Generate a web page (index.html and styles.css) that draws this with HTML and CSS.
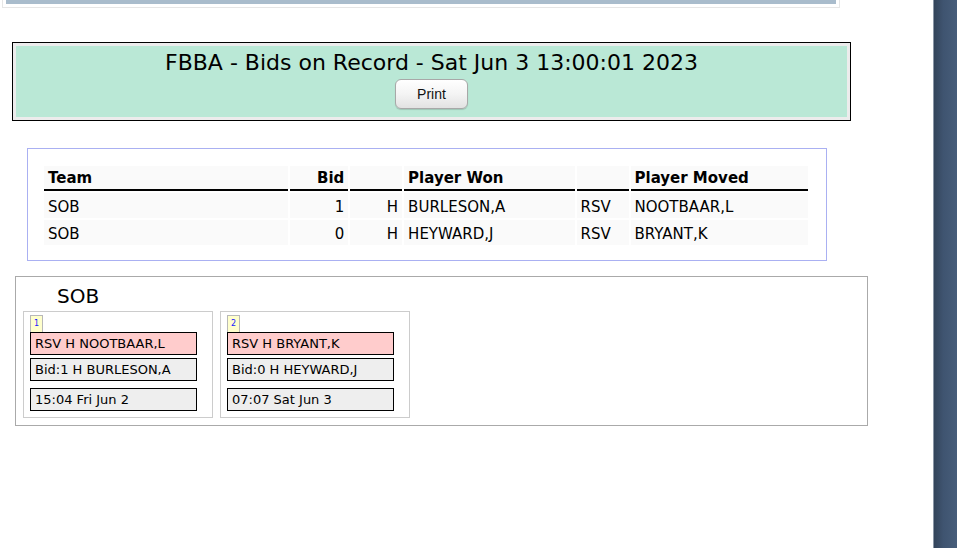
FILE: index.html
```html
<!DOCTYPE html>
<html>
<head>
<meta charset="utf-8">
<title>FBBA - Bids on Record</title>
<link rel="stylesheet" href="styles.css">
</head>
<body>
<div class="layout">
  <div class="main">
    <div class="topbox"><div class="topbar"></div></div>

    <div class="header">
      <div class="header-inner">
        <div class="title">FBBA - Bids on Record - Sat Jun 3 13:00:01 2023</div>
        <button class="print">Print</button>
      </div>
    </div>

    <div class="tablebox">
      <table class="bids">
        <thead>
          <tr>
            <th class="c-team">Team</th>
            <th class="c-bid num">Bid</th>
            <th class="c-pos"></th>
            <th class="c-won">Player Won</th>
            <th class="c-rsv"></th>
            <th class="c-moved">Player Moved</th>
          </tr>
        </thead>
        <tbody>
          <tr>
            <td>SOB</td>
            <td class="num">1</td>
            <td class="num">H</td>
            <td>BURLESON,A</td>
            <td>RSV</td>
            <td>NOOTBAAR,L</td>
          </tr>
          <tr>
            <td>SOB</td>
            <td class="num">0</td>
            <td class="num">H</td>
            <td>HEYWARD,J</td>
            <td>RSV</td>
            <td>BRYANT,K</td>
          </tr>
        </tbody>
      </table>
    </div>

    <div class="teambox">
      <div class="teamname">SOB</div>
      <div class="cards">
        <div class="card">
          <div class="badge">1</div>
          <div class="line moved">RSV H NOOTBAAR,L</div>
          <div class="line">Bid:1 H BURLESON,A</div>
          <div class="line date">15:04 Fri Jun 2</div>
        </div>
        <div class="card">
          <div class="badge">2</div>
          <div class="line moved">RSV H BRYANT,K</div>
          <div class="line">Bid:0 H HEYWARD,J</div>
          <div class="line date">07:07 Sat Jun 3</div>
        </div>
      </div>
    </div>
  </div>
  <div class="side"></div>
</div>
</body>
</html>
```

FILE: styles.css
```css
html, body {
  margin: 0;
  padding: 0;
  background: #ffffff;
}
body {
  font-family: "DejaVu Sans", Verdana, sans-serif;
  color: #000;
  overflow: hidden;
}
.layout {
  display: flex;
  height: 548px;
}
.main {
  width: 933px;
  flex: none;
}
.side {
  flex: 1;
  border-left: 1px solid #8a96a6;
  background: linear-gradient(to right, #33445a, #3f5470 40%, #475d7a);
}

.topbox {
  margin-left: 2px;
  width: 830px;
  padding: 0 3px 3px;
  border: 1px solid #e6e6e6;
  border-top: none;
}
.topbar {
  height: 4px;
  background: #a9bccc;
}

.header {
  margin: 34px 0 0 12px;
  width: 831px;
  border: 1px solid #000;
  padding: 3px;
  background: #ececec;
}
.header-inner {
  background: #bae8d6;
  height: 71px;
  display: flex;
  flex-direction: column;
  align-items: center;
  padding-top: 4px;
  box-sizing: border-box;
}
.title {
  font-size: 22px;
  line-height: 26px;
}
.print {
  margin-top: 3px;
  width: 73px;
  height: 30px;
  font-family: "Liberation Sans", Arial, sans-serif;
  font-size: 14px;
  color: #111;
  border: 1px solid #a8a8a8;
  border-radius: 6px;
  background: linear-gradient(to bottom, #ffffff, #f4f4f4 50%, #e2e2e2);
  box-shadow: 0 1px 1px rgba(0,0,0,0.15);
}

.tablebox {
  margin: 27px 0 0 27px;
  width: 766px;
  height: 94px;
  border: 1px solid #aab0f2;
  padding: 17px 16px 0;
}
.bids {
  border-collapse: separate;
  border-spacing: 2px 2px;
  margin-left: -2px;
  margin-top: -2px;
  font-size: 15px;
}
.bids th {
  text-align: left;
  font-weight: bold;
  font-size: 15px;
  background: #fafafa;
  border-bottom: 2px solid #000;
  height: 23px;
  padding: 0 4px;
  vertical-align: middle;
}
.bids td {
  background: #fafafa;
  height: 22px;
  padding: 3px 4px 0;
  vertical-align: middle;
}
.bids .num {
  text-align: right;
}
.c-team { width: 237px; }
.c-bid { width: 51px; }
.c-pos { width: 44px; }
.c-won { width: 163px; }
.c-rsv { width: 44px; }
.c-moved { width: 170px; }

.teambox {
  margin: 15px 0 0 15px;
  width: 837px;
  height: 148px;
  border: 1px solid #aaaaaa;
  padding: 0 7px;
}
.teamname {
  font-size: 20px;
  line-height: 24px;
  padding: 7px 0 0 34px;
  height: 27px;
}
.cards {
  display: flex;
  gap: 7px;
}
.card {
  box-sizing: border-box;
  width: 190px;
  height: 107px;
  border: 1px solid #cccccc;
  padding: 3px 6px 0;
}
.badge {
  width: 11px;
  height: 16px;
  border: 1px solid #b8b8b8;
  border-bottom: none;
  background: #ffffcc;
  color: #2020ff;
  font-size: 8px;
  line-height: 16px;
  text-align: center;
}
.line {
  width: 161px;
  height: 21px;
  border: 1px solid #000;
  background: #eeeeee;
  font-size: 13px;
  line-height: 21px;
  padding-left: 4px;
  margin-bottom: 3px;
  white-space: nowrap;
}
.line.moved {
  background: #ffcccc;
}
.line.date {
  margin-top: 7px;
}
```
